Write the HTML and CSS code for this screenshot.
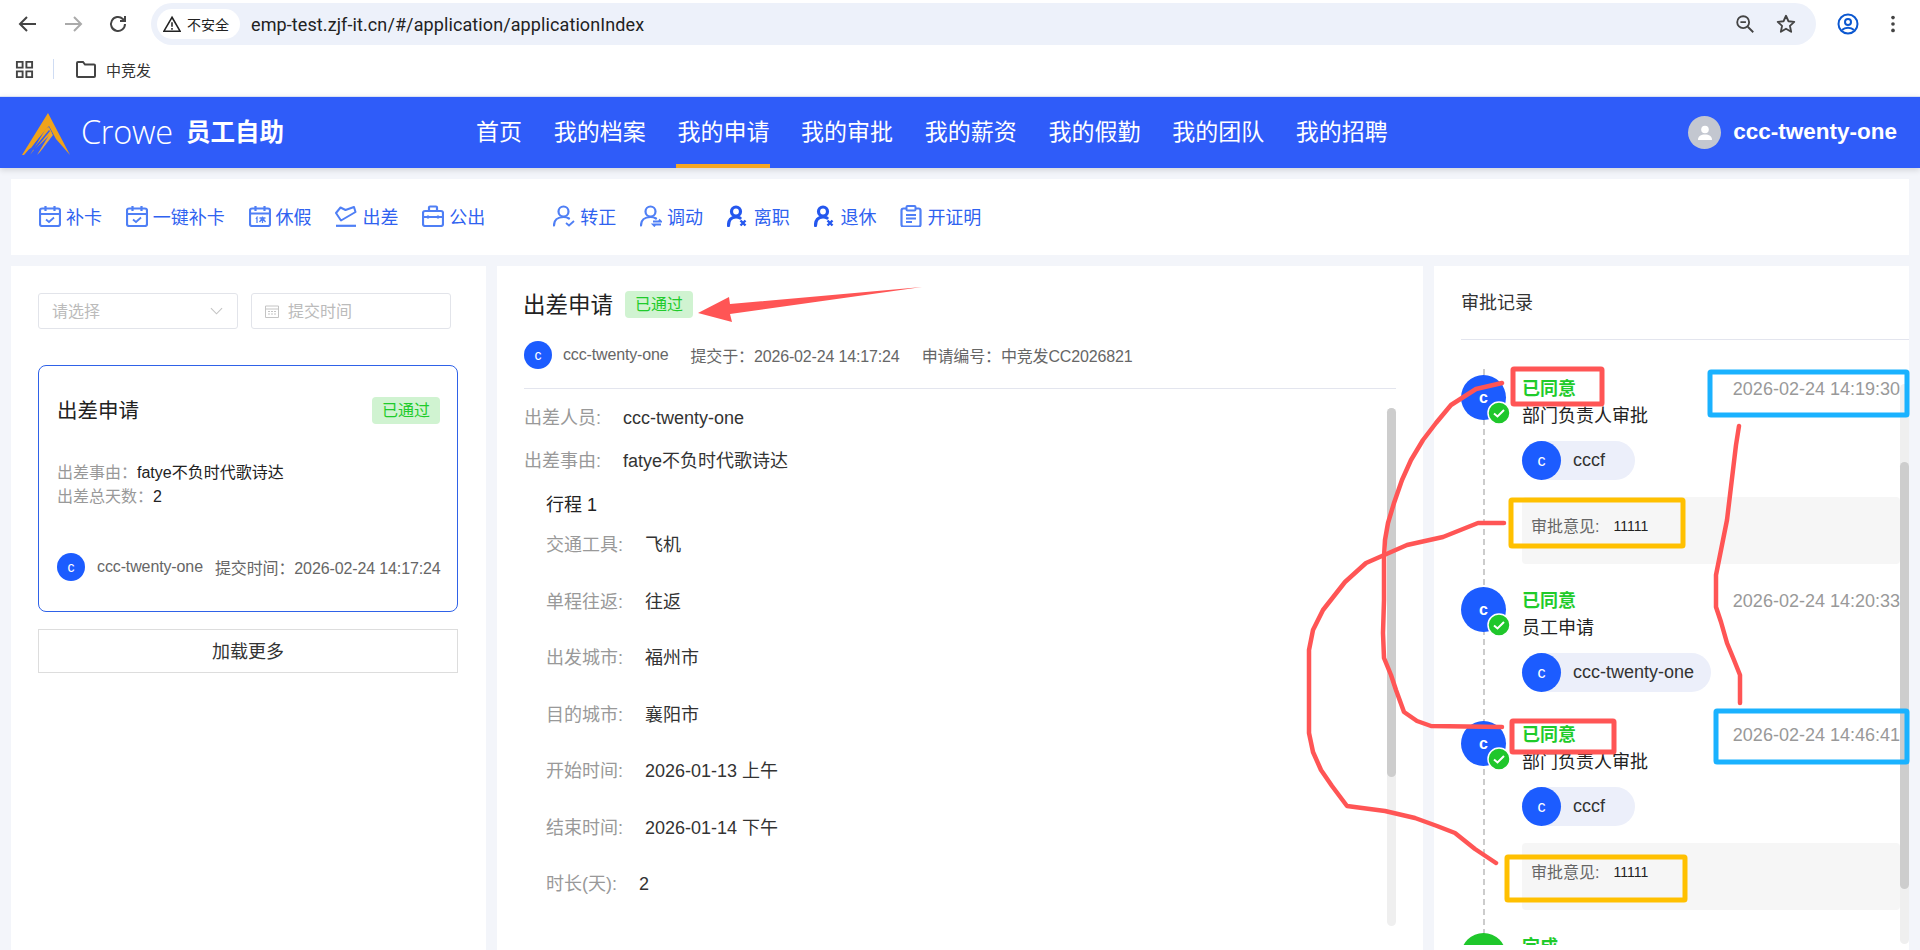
FILE: index.html
```html
<!DOCTYPE html>
<html lang="zh-CN">
<head>
<meta charset="utf-8">
<title>员工自助</title>
<link rel="stylesheet" href="styles.css">
</head>
<body>
<svg class="defs" width="0" height="0">
  <symbol id="i-cal" viewBox="0 0 22 22"><rect x="1" y="3.500" width="20" height="17.500" rx="2" fill="none" stroke="currentColor" stroke-width="2.200"/><path d="M1 9h20M6.500 1v5M15.500 1v5" stroke="currentColor" stroke-width="2.200" fill="none"/><path d="M7 14.500l3 2.500 5-4.500" stroke="currentColor" stroke-width="1.800" fill="none"/></symbol>
  <symbol id="i-leave" viewBox="0 0 22 22"><rect x="1" y="3.500" width="20" height="17.500" rx="2" fill="none" stroke="currentColor" stroke-width="2.200"/><path d="M1 8.500h20M6.500 1v5M15.500 1v5" stroke="currentColor" stroke-width="2.200" fill="none"/><path d="M8.500 11.500l-1.500 2.500M8 13v5M10.500 13h6M13.500 11.500v6.500M13.500 13l-3 4M13.500 13l3 4" stroke="currentColor" stroke-width="1.300" fill="none"/></symbol>
  <symbol id="i-trip" viewBox="0 0 22 22"><path d="M1 8l4.500-5.500L10.500 5 19 2l1.500 5L6 15.500z" fill="none" stroke="currentColor" stroke-width="2" stroke-linejoin="round"/><path d="M1 20.800h20" stroke="currentColor" stroke-width="2.200"/></symbol>
  <symbol id="i-case" viewBox="0 0 22 22"><rect x="1" y="6" width="20" height="15" rx="2" fill="none" stroke="currentColor" stroke-width="2.200"/><path d="M7 6V2.500a1 1 0 0 1 1-1h6a1 1 0 0 1 1 1V6M1 12h20M6 10.500v3M16 10.500v3" stroke="currentColor" stroke-width="2.200" fill="none"/></symbol>
  <symbol id="i-user-ok" viewBox="0 0 22 22"><circle cx="10.500" cy="6.500" r="5" fill="none" stroke="currentColor" stroke-width="2.200"/><path d="M1 20.500c0-5 3.500-8.500 9.500-8.500 2 0 4 .5 5.500 1.500" fill="none" stroke="currentColor" stroke-width="2.200" stroke-linecap="round"/><path d="M13 18l3 2.500 5-4.500" fill="none" stroke="currentColor" stroke-width="1.800"/></symbol>
  <symbol id="i-user-move" viewBox="0 0 22 22"><circle cx="10.500" cy="6.500" r="5" fill="none" stroke="currentColor" stroke-width="2.200"/><path d="M1 20.500c0-5 3.500-8.500 9.500-8.500 2 0 4 .5 5.500 1.500" fill="none" stroke="currentColor" stroke-width="2.200" stroke-linecap="round"/><path d="M13 16.500h8l-2-2M21 19.500h-8l2 2" fill="none" stroke="currentColor" stroke-width="1.800"/></symbol>
  <symbol id="i-user-x" viewBox="0 0 22 22"><circle cx="9" cy="6.500" r="4.500" fill="none" stroke="currentColor" stroke-width="3.200"/><path d="M1.500 20.500c0-5 2.500-8.500 7.500-8.500 1.500 0 3 .3 4 1" fill="none" stroke="currentColor" stroke-width="3.200" stroke-linecap="round"/><path d="M13.500 15.500l5 5M18.500 15.500l-5 5" stroke="currentColor" stroke-width="2.400"/></symbol>
  <symbol id="i-paper" viewBox="0 0 22 22"><rect x="1.500" y="3.500" width="19" height="18" rx="2" fill="none" stroke="currentColor" stroke-width="2.200"/><rect x="6.500" y="1" width="9" height="4.500" rx="1" fill="#fff" stroke="currentColor" stroke-width="2"/><path d="M6 10h10M6 13.500h10M6 17h6" stroke="currentColor" stroke-width="1.800"/></symbol>
  <symbol id="i-check" viewBox="0 0 24 24"><circle cx="12" cy="12" r="11" fill="#1fc72b" stroke="#fff" stroke-width="1.500"/><path d="M7 12.500l3.500 3 6.500-6.500" fill="none" stroke="#fff" stroke-width="2"/></symbol>
</svg>

<div class="chrome">
  <div class="chrome-top">
    <svg class="nav-ico" viewBox="0 0 24 24"><path d="M20 12H5M11 5l-7 7 7 7" fill="none" stroke="#444" stroke-width="2"/></svg>
    <svg class="nav-ico" viewBox="0 0 24 24"><path d="M4 12h15M13 5l7 7-7 7" fill="none" stroke="#aaa" stroke-width="2"/></svg>
    <svg class="nav-ico" viewBox="0 0 24 24"><path d="M19 12a7 7 0 1 1-2.200-5.100L19 9M19 4v5h-5" fill="none" stroke="#444" stroke-width="2"/></svg>
    <div class="omnibox">
      <div class="secure">
        <svg class="warn" viewBox="0 0 20 20"><path d="M10 2.500L19 18H1z" fill="none" stroke="#222" stroke-width="1.800"/><path d="M10 8v5M10 14.500v1.800" stroke="#222" stroke-width="1.700"/></svg>
        <span>不安全</span>
      </div>
      <span class="url">emp-test.zjf-it.cn/#/application/applicationIndex</span>
      <svg class="omni-ico" viewBox="0 0 24 24"><circle cx="10" cy="10" r="6.500" fill="none" stroke="#444" stroke-width="2"/><path d="M7 10h6M15 15l6 6" stroke="#444" stroke-width="2"/></svg>
      <svg class="omni-ico" viewBox="0 0 24 24"><path d="M12 3l2.700 6 6.300.7-4.700 4.300 1.300 6.500-5.600-3.300-5.600 3.300 1.300-6.500L3 9.700 9.300 9z" fill="none" stroke="#444" stroke-width="2" stroke-linejoin="round"/></svg>
    </div>
    <svg class="profile-ico" viewBox="0 0 24 24"><circle cx="12" cy="12" r="9.500" fill="none" stroke="#0b57d0" stroke-width="2"/><circle cx="12" cy="10" r="3" fill="none" stroke="#0b57d0" stroke-width="2"/><path d="M6 18c3-3 9-3 12 0" fill="none" stroke="#0b57d0" stroke-width="2"/></svg>
    <svg class="menu-ico" viewBox="0 0 24 24"><circle cx="12" cy="5" r="2" fill="#444"/><circle cx="12" cy="12" r="2" fill="#444"/><circle cx="12" cy="19" r="2" fill="#444"/></svg>
  </div>
  <div class="bookmarks">
    <svg class="apps-ico" viewBox="0 0 20 20"><path d="M2 2h6v6H2zM12 2h6v6h-6zM2 12h6v6H2zM12 12h6v6h-6z" fill="none" stroke="#444" stroke-width="2"/></svg>
    <span class="bm-sep"></span>
    <svg class="folder-ico" viewBox="0 0 22 20"><path d="M2 4a1 1 0 0 1 1-1h5l2 2.500h9a1 1 0 0 1 1 1V17a1 1 0 0 1-1 1H3a1 1 0 0 1-1-1z" fill="none" stroke="#444" stroke-width="2"/></svg>
    <span class="bm-text">中竞发</span>
  </div>
</div>

<header class="topbar">
  <div class="brand">
    <svg class="logo" viewBox="0 0 48 42">
      <path d="M26 0L48 42 34 26 27 13 2 42H0z" fill="#f0a31b"/>
      <path d="M24 15.500L27 14 30 20 11 38 8 42z" fill="#f0a31b"/>
      <path d="M5 37L21 17 24 15 9 35z" fill="#f0a31b"/>
      <path d="M29 19L31 22 18 39 15 42z" fill="#e8a63a"/>
      <path d="M11 36L27 17 28 18 12 38z" fill="#2f5cf9"/>
    </svg>
    <span class="crowe">Crowe</span>
    <span class="brand-name">员工自助</span>
  </div>
  <nav class="mainnav">
    <a class="nav-item">首页</a>
    <a class="nav-item">我的档案</a>
    <a class="nav-item active">我的申请</a>
    <a class="nav-item">我的审批</a>
    <a class="nav-item">我的薪资</a>
    <a class="nav-item">我的假勤</a>
    <a class="nav-item">我的团队</a>
    <a class="nav-item">我的招聘</a>
  </nav>
  <div class="account">
    <span class="account-avatar"><svg viewBox="0 0 20 20"><circle cx="10" cy="6.500" r="3.800" fill="#fff"/><path d="M3 17c0-4 3-5.500 7-5.500s7 1.500 7 5.500z" fill="#fff"/></svg></span>
    <span class="account-name">ccc-twenty-one</span>
  </div>
</header>

<main class="page">
  <section class="quickbar">
    <div class="quick-group">
      <a class="quick"><svg class="q-ico"><use href="#i-cal"/></svg>补卡</a>
      <a class="quick"><svg class="q-ico"><use href="#i-cal"/></svg>一键补卡</a>
      <a class="quick"><svg class="q-ico"><use href="#i-leave"/></svg>休假</a>
      <a class="quick"><svg class="q-ico"><use href="#i-trip"/></svg>出差</a>
      <a class="quick"><svg class="q-ico"><use href="#i-case"/></svg>公出</a>
    </div>
    <div class="quick-group">
      <a class="quick"><svg class="q-ico"><use href="#i-user-ok"/></svg>转正</a>
      <a class="quick"><svg class="q-ico"><use href="#i-user-move"/></svg>调动</a>
      <a class="quick"><svg class="q-ico strong"><use href="#i-user-x"/></svg>离职</a>
      <a class="quick"><svg class="q-ico strong"><use href="#i-user-x"/></svg>退休</a>
      <a class="quick"><svg class="q-ico"><use href="#i-paper"/></svg>开证明</a>
    </div>
  </section>

  <div class="columns">
    <section class="panel list-panel">
      <div class="filters">
        <div class="field"><span class="placeholder">请选择</span><svg class="chevron" viewBox="0 0 14 8"><path d="M1 1l6 6 6-6" fill="none" stroke="#c4c4c4" stroke-width="1.200"/></svg></div>
        <div class="field date"><svg class="date-ico" viewBox="0 0 14 14"><path d="M.5 2h13v11.500H.5zM.5 5h13M3 7.500h2M6 7.500h2M9 7.500h2M3 10h2M6 10h2M9 10h2" fill="none" stroke="#c4c4c4"/></svg><span class="placeholder">提交时间</span></div>
      </div>
      <article class="apply-card">
        <div class="apply-head"><h3 class="apply-title">出差申请</h3><span class="tag">已通过</span></div>
        <div class="apply-info">
          <p><span class="muted">出差事由：</span>fatye不负时代歌诗达</p>
          <p><span class="muted">出差总天数：</span>2</p>
        </div>
        <div class="apply-foot">
          <span class="avatar a28">c</span>
          <span class="foot-name">ccc-twenty-one</span>
          <span>提交时间：2026-02-24 14:17:24</span>
        </div>
      </article>
      <button class="load-more">加载更多</button>
    </section>

    <section class="panel detail-panel">
      <div class="detail-title"><h2>出差申请</h2><span class="tag">已通过</span></div>
      <div class="detail-meta">
        <span class="avatar a28">c</span>
        <span class="meta-name">ccc-twenty-one</span>
        <span class="meta-time">提交于：2026-02-24 14:17:24</span>
        <span>申请编号：中竞发CC2026821</span>
      </div>
      <div class="detail-body">
        <div class="detail-content">
          <div class="kv top"><span class="k">出差人员:</span><span class="v">ccc-twenty-one</span></div>
          <div class="kv top"><span class="k">出差事由:</span><span class="v">fatye不负时代歌诗达</span></div>
          <div class="trip">
            <h4 class="trip-title">行程 1</h4>
            <div class="kv"><span class="k">交通工具:</span><span class="v">飞机</span></div>
            <div class="kv"><span class="k">单程往返:</span><span class="v">往返</span></div>
            <div class="kv"><span class="k">出发城市:</span><span class="v">福州市</span></div>
            <div class="kv"><span class="k">目的城市:</span><span class="v">襄阳市</span></div>
            <div class="kv"><span class="k">开始时间:</span><span class="v">2026-01-13 上午</span></div>
            <div class="kv"><span class="k">结束时间:</span><span class="v">2026-01-14 下午</span></div>
            <div class="kv"><span class="k short">时长(天):</span><span class="v">2</span></div>
          </div>
        </div>
        <div class="scroll scroll-mid"><div class="thumb"></div></div>
      </div>
    </section>

    <section class="panel record-panel">
      <div class="record-head">审批记录</div>
      <div class="record-body">
        <div class="timeline">
          <div class="step">
            <div class="step-avatar"><span class="avatar a45">c</span><svg class="badge"><use href="#i-check"/></svg></div>
            <div class="step-main">
              <div class="step-top"><span class="state">已同意</span><span class="time">2026-02-24 14:19:30</span></div>
              <div class="step-name">部门负责人审批</div>
              <div class="chip"><span class="avatar a39">c</span><span>cccf</span></div>
              <div class="opinion"><span class="op-k">审批意见:</span><span class="op-v">11111</span></div>
            </div>
          </div>
          <div class="step">
            <div class="step-avatar"><span class="avatar a45">c</span><svg class="badge"><use href="#i-check"/></svg></div>
            <div class="step-main">
              <div class="step-top"><span class="state">已同意</span><span class="time">2026-02-24 14:20:33</span></div>
              <div class="step-name">员工申请</div>
              <div class="chip"><span class="avatar a39">c</span><span>ccc-twenty-one</span></div>
            </div>
          </div>
          <div class="step">
            <div class="step-avatar"><span class="avatar a45">c</span><svg class="badge"><use href="#i-check"/></svg></div>
            <div class="step-main">
              <div class="step-top"><span class="state">已同意</span><span class="time">2026-02-24 14:46:41</span></div>
              <div class="step-name">部门负责人审批</div>
              <div class="chip"><span class="avatar a39">c</span><span>cccf</span></div>
              <div class="opinion"><span class="op-k">审批意见:</span><span class="op-v">11111</span></div>
            </div>
          </div>
          <div class="step">
            <div class="step-avatar"><span class="avatar a45 done"><svg viewBox="0 0 34 34"><rect x="5" y="9" width="24" height="16" rx="3" fill="none" stroke="#fff" stroke-width="2"/><path d="M10 14h14" stroke="#fff" stroke-width="2"/></svg></span></div>
            <div class="step-main"><div class="step-top"><span class="state">完成</span></div></div>
          </div>
        </div>
        <div class="scroll scroll-right"><div class="thumb"></div></div>
      </div>
    </section>
  </div>
</main>

<svg class="annotations" viewBox="0 0 1920 950">
  <path class="a-arrow" d="M922 287L730 304 729 297 698 313 732 322 730 314z"/>
  <rect class="a-red" x="1513" y="369" width="89" height="35" rx="1"/>
  <rect class="a-red" x="1512" y="721" width="102" height="31" rx="1"/>
  <rect class="a-blue" x="1710" y="372" width="197" height="43" rx="1"/>
  <rect class="a-blue" x="1716" y="711" width="191" height="51" rx="1"/>
  <rect class="a-yellow" x="1511" y="500" width="172" height="46" rx="1"/>
  <rect class="a-yellow" x="1507" y="857" width="178" height="43" rx="1"/>
  <path class="a-line" d="M1502 383L1476 389 1451 405 1436 423 1423 440 1411 460 1402 480 1394 503 1388 523 1385 540 1384 557 1384 600 1383 633 1384 658 1391 675 1396 690 1404 712 1417 721 1431 726 1502 727"/>
  <path class="a-line" d="M1504 523L1478 523 1443 537 1407 545 1366 563 1345 582 1323 610 1313 630 1309 650 1309 733 1313 752 1321 770 1332 786 1347 806 1385 811 1415 818 1437 826 1455 833 1475 849 1496 863"/>
  <path class="a-line" d="M1739 426L1736 445 1733 470 1727 520 1716 575 1716 607 1721 622 1727 643 1734 660 1740 675 1740 703"/>
</svg>
</body>
</html>
```

FILE: styles.css
```css
* { box-sizing: border-box; }
html, body { margin: 0; height: 950px; overflow: hidden; }
body {
  position: relative;
  display: flex;
  flex-direction: column;
  background: #f3f5fa;
  color: #222;
  font-family: "Liberation Sans", "Noto Sans CJK SC", sans-serif;
  font-size: 16px;
}
h2, h3, h4, p { margin: 0; font-weight: 400; }
.defs { position: absolute; }

/* browser chrome */
.chrome { height: 96px; background: #fff; flex: none; }
.chrome-top { height: 48px; padding: 3px 0 3px 16px; display: flex; align-items: center; }
.nav-ico { width: 24px; height: 24px; margin-right: 21px; flex: none; }
.omnibox {
  width: 1665px; height: 42px;
  display: flex; align-items: center;
  background: #edf1fa; border-radius: 21px;
  padding: 0 19px 0 6px;
}
.secure {
  width: 83px; height: 30px; border-radius: 15px; background: #fff;
  display: flex; align-items: center; gap: 6px; padding-left: 6px;
  font-size: 14px; color: #222; flex: none;
}
.warn { width: 18px; height: 18px; }
.url { margin-left: 11px; flex: 1; font-family: Roboto, sans-serif; font-size: 18px; color: #222; letter-spacing: .1px; }
.omni-ico { width: 22px; height: 22px; margin-left: 19px; flex: none; }
.profile-ico { width: 24px; height: 24px; margin-left: 20px; flex: none; }
.menu-ico { width: 22px; height: 22px; margin-left: 22px; flex: none; }
.bookmarks { height: 48px; padding: 0 0 6px 15px; display: flex; align-items: center; }
.apps-ico { width: 19px; height: 19px; }
.bm-sep { width: 1px; height: 20px; background: #cfdcf3; margin: 0 21px 0 19px; }
.folder-ico { width: 22px; height: 20px; }
.bm-text { margin-left: 9px; font-size: 15px; color: #333; }

/* top bar */
.topbar {
  height: 72px; flex: none; background: #2f5cf9; color: #fff;
  display: flex; align-items: center; position: relative;
  box-shadow: 0 2px 6px rgba(0, 0, 0, .14);
  border-top: 1px solid #d9e2f5;
  padding: 0 23px 0 22px;
}
.brand { display: flex; align-items: center; width: 453px; flex: none; }
.logo { width: 48px; height: 42px; flex: none; margin-top: 2px; }
.crowe { margin-left: 11px; font-family: "Open Sans", sans-serif; font-weight: 300; font-size: 32.500px; width: 93px; padding-bottom: 2px; letter-spacing: -.3px; }
.brand-name { margin-left: 12px; font-size: 24.500px; font-weight: 700; padding-bottom: 4px; }
.mainnav { display: flex; gap: 29.700px; align-self: stretch; flex: 1; }
.nav-item { font-size: 23px; display: flex; align-items: center; padding: 0 1px 2px; border-bottom: 4px solid transparent; }
.nav-item.active { border-bottom-color: #f5a623; }
.account { display: flex; align-items: center; gap: 12px; }
.account-avatar { width: 33px; height: 33px; border-radius: 50%; background: #c3c7d0; display: flex; align-items: center; justify-content: center; }
.account-avatar svg { width: 20px; height: 20px; }
.account-name { font-size: 22.500px; font-weight: 700; padding-bottom: 2px; }

/* page */
.page { flex: 1; min-height: 0; padding: 11px 11px 0; display: flex; flex-direction: column; gap: 11px; }
.quickbar { height: 76px; flex: none; background: #fff; padding-left: 28px; padding-bottom: 2px; display: flex; align-items: center; gap: 68px; }
.quick-group { display: flex; gap: 23.800px; }
.quick { display: flex; align-items: center; gap: 5px; font-size: 18px; color: #2f62f0; }
.q-ico { width: 22px; height: 22px; color: #4f7ff5; flex: none; }
.q-ico.strong { color: #2457ee; }

.columns { flex: 1; min-height: 0; display: grid; grid-template-columns: 475px 1fr 475px; gap: 11px; }
.panel { background: #fff; min-height: 0; overflow: hidden; }

.list-panel { padding: 27px 28px 0 27px; }
.filters { display: flex; gap: 13px; }
.field {
  width: 200px; height: 36px; border: 1px solid #e2e4ea; border-radius: 3px;
  display: flex; align-items: center; justify-content: space-between; padding: 0 14px 0 13px;
}
.field.date { justify-content: flex-start; gap: 9px; }
.placeholder { color: #bbb; font-size: 16px; padding-bottom: 2px; }
.chevron { width: 13px; height: 8px; }
.date-ico { width: 14px; height: 14px; }

.apply-card { margin-top: 36px; height: 247px; border: 1px solid #2f62e8; border-radius: 8px; padding: 30px 17px 0 18px; }
.apply-head { display: flex; align-items: center; justify-content: space-between; height: 28px; }
.apply-title { font-size: 20.500px; padding-bottom: 2px; }
.tag { display: inline-block; height: 27px; line-height: 27px; padding: 0 10px; background: #d0f3d1; color: #1fcb2b; border-radius: 4px; font-size: 16px; }
.apply-info { margin-top: 37px; line-height: 24px; }
.muted { color: #999; }
.apply-foot { margin-top: 44px; margin-right: -3px; display: flex; align-items: center; color: #666; white-space: nowrap; letter-spacing: -.12px; }
.foot-name { margin: 0 12px; }
.avatar { display: inline-flex; align-items: center; justify-content: center; border-radius: 50%; background: #1c5cff; color: #fff; flex: none; }
.a28 { width: 28px; height: 28px; font-size: 14px; }
.a39 { width: 39px; height: 39px; font-size: 16px; }
.a45 { width: 45px; height: 45px; font-size: 16px; font-weight: 700; }
.load-more { display: block; width: 420px; height: 44px; margin-top: 17px; background: #fff; border: 1px solid #ddd; font: inherit; font-size: 18px; color: #333; padding: 0 0 2px; }

.detail-panel { padding: 22px 27px 0; }
.detail-title { display: flex; align-items: center; gap: 12px; height: 30px; }
.detail-title h2 { font-size: 22.500px; margin-left: -1px; }
.detail-title .tag { margin-top: 3px; }
.detail-meta { margin-top: 23px; padding-bottom: 19px; border-bottom: 1px solid #e3e5ee; display: flex; align-items: center; color: #666; white-space: nowrap; letter-spacing: -.15px; }
.meta-name { margin-left: 11px; }
.meta-time { margin: 0 22px; }
.detail-body { display: flex; }
.detail-content { flex: 1; padding-top: 16px; }
.kv { display: flex; font-size: 18px; line-height: 27px; margin-bottom: 29.500px; color: #333; }
.kv.top { margin-bottom: 16px; }
.k { color: #999; width: 99px; flex: none; }
.k.short { width: 93px; }
.trip { padding-left: 22px; margin-top: 17px; }
.trip-title { font-size: 18px; line-height: 27px; margin-bottom: 13px; }

.scroll { width: 9px; border-radius: 5px; background: #efefef; flex: none; }
.thumb { width: 9px; border-radius: 5px; background: #cdcdcd; }
.scroll-mid { margin-top: 19px; height: 518px; }
.scroll-mid .thumb { height: 369px; }
.scroll-right { margin-top: 44px; height: 560px; padding-top: 78px; }
.scroll-right .thumb { height: 427px; }

.record-panel { padding-left: 27px; }
.record-head { height: 74px; padding-top: 24px; line-height: 27px; font-size: 18px; color: #333; border-bottom: 1px solid #e3e5ee; }
.record-body { display: flex; }
.timeline { flex: 1; height: 605px; overflow: hidden; padding-top: 35px; position: relative; }
.timeline::before { content: ""; position: absolute; left: 22px; top: 29px; bottom: 0; border-left: 2px dashed #ccc; }
.step { display: flex; gap: 16px; padding-bottom: 12px; position: relative; }
.step-avatar { position: relative; width: 45px; flex: none; }
.badge { position: absolute; left: 26px; top: 26px; width: 24px; height: 24px; }
.step-main { flex: 1; min-width: 0; font-size: 18px; line-height: 27px; }
.step-top { display: flex; justify-content: space-between; margin-top: 1px; }
.state { font-weight: 700; color: #1fcb2b; }
.time { color: #999; }
.step-name { color: #222; }
.chip { display: flex; align-items: center; width: max-content; min-width: 113px; height: 39px; margin-top: 11px; margin-bottom: 17px; padding-right: 17px; gap: 12px; border-radius: 20px; background: #eceffa; color: #333; font-size: 18px; }
.opinion { height: 67px; margin-bottom: 11px; border-radius: 4px; background: #f6f6f6; padding-left: 9px; padding-top: 16px; font-size: 16px; line-height: 27px; color: #666; display: flex; gap: 14px; }
.op-v { color: #222; font-size: 14px; }
.done { background: #1fc72b; }
.done svg { width: 34px; height: 34px; }

/* hand-drawn marks over the screenshot */
.annotations { position: absolute; left: 0; top: 0; width: 1920px; height: 950px; pointer-events: none; }
.annotations * { fill: none; }
.annotations .a-arrow { fill: #ff5555; }
.a-red { stroke: #ff5555; stroke-width: 5; }
.a-blue { stroke: #1ab2ff; stroke-width: 5; }
.a-yellow { stroke: #ffc000; stroke-width: 5; }
.a-line { stroke: #ff5555; stroke-width: 4.500; stroke-linejoin: round; stroke-linecap: round; }
```
